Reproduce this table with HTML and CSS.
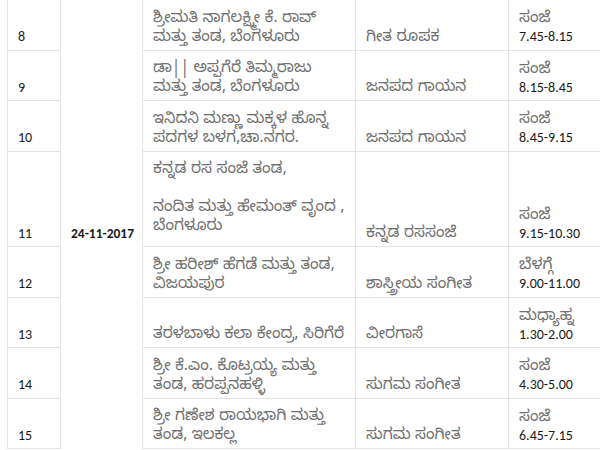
FILE: index.html
```html
<!DOCTYPE html>
<html lang="kn">
<head>
<meta charset="utf-8">
<title>ಕಾರ್ಯಕ್ರಮ ಪಟ್ಟಿ</title>
<link rel="stylesheet" href="styles.css">
</head>
<body>
<div class="frame">
<table class="schedule">
  <colgroup>
    <col class="c-no"><col class="c-date"><col class="c-troupe"><col class="c-type"><col class="c-time">
  </colgroup>
  <tbody>
    <tr>
      <td class="num">8</td>
      <td class="date"></td>
      <td class="kn">ಶ್ರೀಮತಿ ನಾಗಲಕ್ಷ್ಮೀ ಕೆ. ರಾವ್<br>ಮತ್ತು ತಂಡ, ಬೆಂಗಳೂರು</td>
      <td class="kn">ಗೀತ ರೂಪಕ</td>
      <td class="time"><span class="slot">ಸಂಜೆ</span><span class="hours">7.45-8.15</span></td>
    </tr>
    <tr>
      <td class="num">9</td>
      <td class="date"></td>
      <td class="kn">ಡಾ|| ಅಪ್ಪಗೆರೆ ತಿಮ್ಮರಾಜು<br>ಮತ್ತು ತಂಡ, ಬೆಂಗಳೂರು</td>
      <td class="kn">ಜನಪದ ಗಾಯನ</td>
      <td class="time"><span class="slot">ಸಂಜೆ</span><span class="hours">8.15-8.45</span></td>
    </tr>
    <tr>
      <td class="num">10</td>
      <td class="date"></td>
      <td class="kn">ಇನಿದನಿ ಮಣ್ಣು ಮಕ್ಕಳ ಹೊನ್ನ<br>ಪದಗಳ ಬಳಗ,ಚಾ.ನಗರ.</td>
      <td class="kn">ಜನಪದ ಗಾಯನ</td>
      <td class="time"><span class="slot">ಸಂಜೆ</span><span class="hours">8.45-9.15</span></td>
    </tr>
    <tr>
      <td class="num">11</td>
      <td class="date"><b>24-11-2017</b></td>
      <td class="kn"><p class="para first">ಕನ್ನಡ ರಸ ಸಂಜೆ ತಂಡ,</p><p class="para last">ನಂದಿತ ಮತ್ತು ಹೇಮಂತ್ ವೃಂದ ,<br>ಬೆಂಗಳೂರು</p></td>
      <td class="kn">ಕನ್ನಡ ರಸಸಂಜೆ</td>
      <td class="time"><span class="slot">ಸಂಜೆ</span><span class="hours">9.15-10.30</span></td>
    </tr>
    <tr>
      <td class="num">12</td>
      <td class="date"></td>
      <td class="kn">ಶ್ರೀ ಹರೀಶ್ ಹೆಗಡೆ ಮತ್ತು ತಂಡ,<br>ವಿಜಯಪುರ</td>
      <td class="kn">ಶಾಸ್ತ್ರೀಯ ಸಂಗೀತ</td>
      <td class="time"><span class="slot">ಬೆಳಗ್ಗೆ</span><span class="hours">9.00-11.00</span></td>
    </tr>
    <tr>
      <td class="num">13</td>
      <td class="date"></td>
      <td class="kn">ತರಳಬಾಳು ಕಲಾ ಕೇಂದ್ರ, ಸಿರಿಗೆರೆ</td>
      <td class="kn">ವೀರಗಾಸೆ</td>
      <td class="time"><span class="slot">ಮಧ್ಯಾಹ್ನ</span><span class="hours">1.30-2.00</span></td>
    </tr>
    <tr>
      <td class="num">14</td>
      <td class="date"></td>
      <td class="kn">ಶ್ರೀ ಕೆ.ಎಂ. ಕೊಟ್ರಯ್ಯ ಮತ್ತು<br>ತಂಡ, ಹರಪ್ಪನಹಳ್ಳಿ</td>
      <td class="kn">ಸುಗಮ ಸಂಗೀತ</td>
      <td class="time"><span class="slot">ಸಂಜೆ</span><span class="hours">4.30-5.00</span></td>
    </tr>
    <tr>
      <td class="num">15</td>
      <td class="date"></td>
      <td class="kn">ಶ್ರೀ ಗಣೇಶ ರಾಯಭಾಗಿ ಮತ್ತು<br>ತಂಡ, ಇಲಕಲ್ಲ</td>
      <td class="kn">ಸುಗಮ ಸಂಗೀತ</td>
      <td class="time"><span class="slot">ಸಂಜೆ</span><span class="hours">6.45-7.15</span></td>
    </tr>
  </tbody>
</table>
</div>
</body>
</html>
```

FILE: styles.css
```css
html, body {
  margin: 0;
  padding: 0;
  background: #ffffff;
  overflow: hidden;
}

.frame {
  width: 600px;
  height: 450px;
  overflow: hidden;
  padding-left: 7px;
  box-sizing: border-box;
}

.schedule {
  border-collapse: collapse;
  table-layout: fixed;
  width: 660px;
  margin-top: -1px;
  font-family: "Carlito", "Lato", "Liberation Sans", sans-serif;
  font-size: 14px;
  color: #1a1a1a;
}

.c-no { width: 53px; }
.c-date { width: 82px; }
.c-troupe { width: 213px; }
.c-type { width: 153px; }
.c-time { width: 159px; }

.schedule td {
  border: 1px solid #e4e4e4;
  padding: 8px 10px 3.5px;
  vertical-align: bottom;
  line-height: 19px;
  white-space: nowrap;
}

.schedule td.date {
  border-top: none;
  border-bottom: none;
  font-size: 13.5px;
}

.schedule td.kn,
.slot {
  font-family: "Noto Sans Kannada", "Lohit Kannada", "Tunga", "Noto Sans", sans-serif;
  font-size: 15.5px;
  line-height: 19px;
  color: #707070;
}

.schedule td.kn {
  padding-top: 9.5px;
  padding-bottom: 2px;
}

.slot,
.hours {
  display: block;
}

.slot {
  line-height: 15px;
  padding-top: 4px;
}

.hours {
  line-height: 19px;
  font-family: "Carlito", "Lato", "Liberation Sans", sans-serif;
  font-size: 14px;
  color: #1a1a1a;
}

.para {
  margin: 0;
}

.para.first {
  margin-bottom: 19px;
}

.para.last {
  margin-bottom: 7px;
}
```
